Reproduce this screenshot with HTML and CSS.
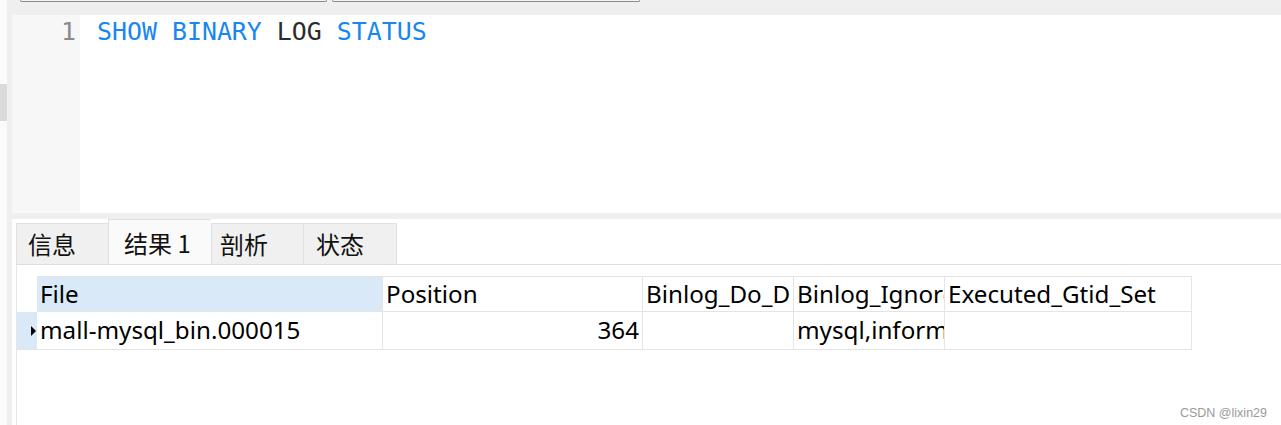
FILE: index.html
```html
<!DOCTYPE html>
<html lang="zh">
<head>
<meta charset="utf-8">
<link rel="stylesheet" href="styles.css">
</head>
<body>
<div class="app">
  <div class="side">
    <div class="thumb"></div>
  </div>
  <div class="main">
    <div class="toolbar">
      <div class="box box1"></div>
      <div class="box box2"></div>
    </div>
    <div class="editor">
      <div class="gutter"><span class="ln">1</span></div>
      <div class="code"><span class="kw">SHOW BINARY</span> <span class="id">LOG</span> <span class="kw">STATUS</span></div>
    </div>
    <div class="split"></div>
    <div class="results">
      <div class="tabs">
        <div class="tab">信息</div>
        <div class="tab active">结果 1</div>
        <div class="tab">剖析</div>
        <div class="tab">状态</div>
        <div class="tab-fill"></div>
      </div>
      <div class="content">
        <div class="grid">
          <div class="row head">
            <div class="ind"></div>
            <div class="cell c1 sel">File</div>
            <div class="cell c2">Position</div>
            <div class="cell c3">Binlog_Do_D</div>
            <div class="cell c4">Binlog_Ignore_DB</div>
            <div class="cell c5">Executed_Gtid_Set</div>
          </div>
          <div class="row data">
            <div class="ind cur"><span class="tri"></span></div>
            <div class="cell c1">mall-mysql_bin.000015</div>
            <div class="cell c2 num">364</div>
            <div class="cell c3"></div>
            <div class="cell c4">mysql,information_schema</div>
            <div class="cell c5"></div>
          </div>
        </div>
        <div class="watermark">CSDN @lixin29</div>
      </div>
    </div>
  </div>
</div>
</body>
</html>
```
FILE: styles.css
```css
html, body {
  margin: 0;
  padding: 0;
  background: #ffffff;
}
body {
  width: 1281px;
  height: 425px;
  overflow: hidden;
  font-family: "Noto Sans", "Noto Sans CJK SC", sans-serif;
}
.app {
  display: flex;
  height: 425px;
}
.side {
  width: 7px;
  background: #fafafa;
  padding-top: 84px;
  box-sizing: border-box;
}
.thumb {
  height: 37px;
  background: #dadada;
}
.main {
  flex: 1;
  display: flex;
  flex-direction: column;
  background: #efefef;
}
.toolbar {
  height: 15px;
  display: flex;
  align-items: flex-start;
  padding-left: 13px;
  gap: 5px;
}
.box {
  height: 1px;
  border: 1px solid #8c8c8c;
  border-top: none;
  border-radius: 0 0 2px 2px;
  background: #f4f4f4;
}
.box1 { width: 305px; }
.box2 { width: 306px; }
.editor {
  height: 198px;
  margin-left: 5px;
  display: flex;
  background: #ffffff;
}
.gutter {
  width: 68px;
  background: #f7f7f7;
  box-sizing: border-box;
  text-align: right;
  padding-right: 4px;
}
.ln, .code {
  font-family: "DejaVu Sans Mono", monospace;
  font-size: 24.9px;
  line-height: 34px;
}
.ln { color: #8a8a8a; }
.code {
  padding-left: 17px;
  white-space: pre;
}
.kw { color: #1a86f0; }
.id { color: #2b2b2b; }
.split {
  height: 6px;
}
.results {
  flex: 1;
  background: #ffffff;
  margin-left: 5px;
  padding-left: 4px;
  display: flex;
  flex-direction: column;
}
.tabs {
  display: flex;
  align-items: flex-end;
  height: 46px;
  border-bottom: 1px solid #dedede;
  box-sizing: border-box;
}
.tab {
  height: 41px;
  box-sizing: border-box;
  background: #f0f0f0;
  border: 1px solid #e1e1e1;
  border-bottom: none;
  border-right: none;
  font-family: "Noto Sans CJK SC", sans-serif;
  font-size: 24px;
  line-height: 40px;
  color: #111;
  padding-left: 11px;
}
.tab:nth-child(1) { width: 92px; }
.tab.active {
  width: 103px;
  height: 45px;
  background: #fafafa;
  padding-left: 15px;
  line-height: 46px;
}
.tab:nth-child(3) { width: 92px; padding-left: 8px; }
.tab:nth-child(4) { width: 94px; border-right: 1px solid #e1e1e1; padding-left: 12px; }
.tab-fill { flex: 1; }
.content {
  flex: 1;
  border-left: 1px solid #e6e6e6;
  padding-top: 11px;
  position: relative;
}
.grid {
  display: flex;
  flex-direction: column;
}
.row {
  display: flex;
}
.row.head { height: 36px; }
.row.data { height: 38px; }
.ind {
  width: 20px;
  box-sizing: border-box;
  border-bottom: 1px solid #e4e4e4;
  position: relative;
}
.row.head .ind { border-bottom: none; }
.ind.cur { background: #d9e9f7; }
.tri {
  position: absolute;
  left: 14px;
  top: 14px;
  width: 0;
  height: 0;
  border-top: 5px solid transparent;
  border-bottom: 5px solid transparent;
  border-left: 5px solid #000;
}
.cell {
  box-sizing: border-box;
  border-right: 1px solid #e4e4e4;
  border-bottom: 1px solid #e4e4e4;
  padding: 0 3px;
  font-size: 24.2px;
  line-height: 36px;
  color: #000;
  white-space: nowrap;
  overflow: hidden;
}
.row.head .cell { line-height: 34px; border-top: 1px solid #e4e4e4; }
.cell.sel { background: #d9e9f7; }
.cell.num { text-align: right; }
.c1 { width: 346px; }
.c2 { width: 260px; }
.c3 { width: 151px; }
.c4 { width: 151px; }
.c5 { width: 247px; }
.watermark {
  position: absolute;
  right: 14px;
  bottom: 5px;
  font-family: "Liberation Sans", sans-serif;
  font-size: 12.5px;
  color: #9a9a9a;
}
```
